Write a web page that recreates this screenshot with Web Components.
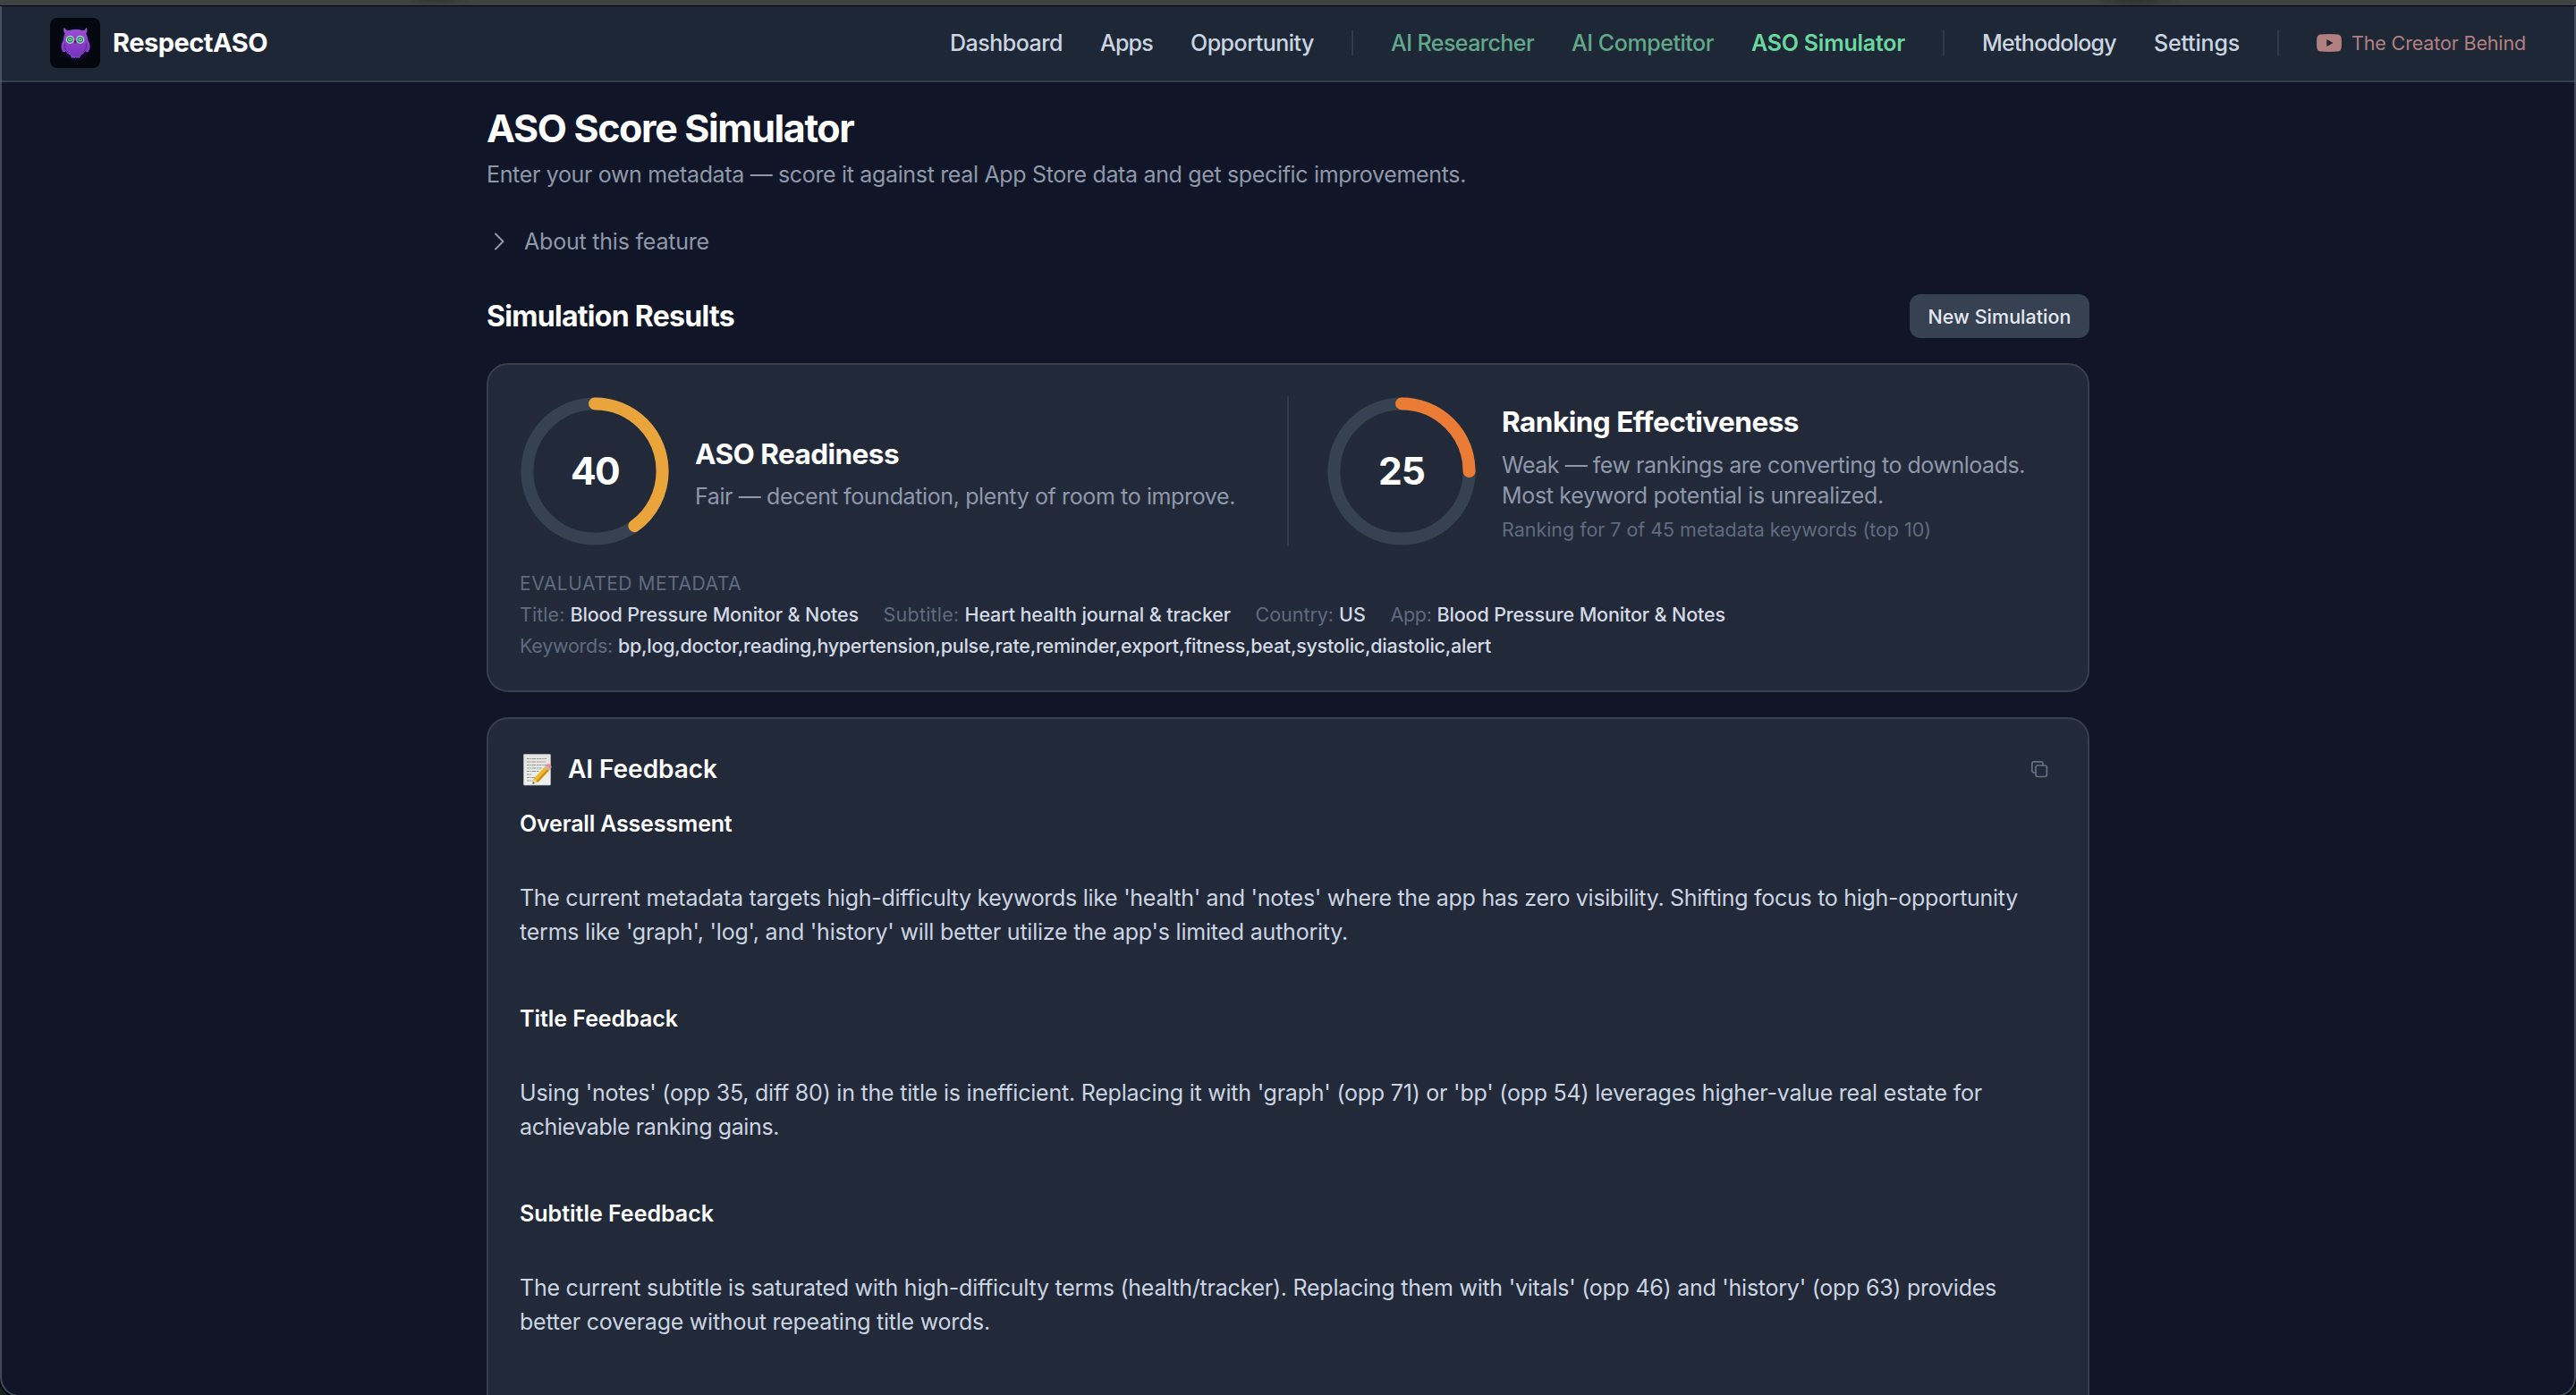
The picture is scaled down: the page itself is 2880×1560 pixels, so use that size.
<!DOCTYPE html>
<html lang="en">
<head>
<meta charset="utf-8">
<title>RespectASO</title>
<style>
html,body{margin:0;height:1560px;overflow:hidden;background:#101627}
body{font-family:Inter,"Liberation Sans",sans-serif;color:#fff}
</style>
</head>
<body>
<aso-app></aso-app>
<script>
function define(name, markup, setup){
  const tpl=document.createElement('template');
  tpl.innerHTML=markup;
  customElements.define(name,class extends HTMLElement{
    connectedCallback(){
      if(this.shadowRoot)return;
      this.attachShadow({mode:'open'}).appendChild(tpl.content.cloneNode(true));
      if(setup)setup(this,this.shadowRoot);
    }
  });
}

define('aso-logo',`
<style>:host{display:block;width:56px;height:56px}svg{display:block}</style>
<svg width="56" height="56" viewBox="0 0 56 56">
<defs><radialGradient id="g"><stop offset="0" stop-color="#5a35d0" stop-opacity=".95"/><stop offset=".6" stop-color="#2b2386" stop-opacity=".45"/><stop offset="1" stop-color="#05070f" stop-opacity="0"/></radialGradient>
<linearGradient id="b" x1="0" y1="0" x2="0" y2="1"><stop offset="0" stop-color="#9a4fd2"/><stop offset=".55" stop-color="#8a3cc6"/><stop offset="1" stop-color="#7434bd"/></linearGradient></defs>
<rect width="56" height="56" rx="8" fill="#04070e"/>
<ellipse cx="28.500" cy="29" rx="21" ry="22" fill="url(#g)"/>
<path d="M16 11.500c1 2.500 3.500 3.300 6 2.800 4-1.300 9-1.300 13 0 2.500.5 4.500-.3 5.500-2.800 1 2 .6 4.300-.8 5.800 1.500 3 1.600 5.700 2.500 8.700 2.500 4 2.500 8.500-.2 12-1.500-.2-2-.7-2.500-1.500-1.500 2.500-3.700 4-6 5l-.8 3-1.700-.8-1.300 1-1.200-1.500-1.200 1.500-1.500-1-1.500.8-.8-3c-2.500-1-4.700-2.500-6-5-.5.8-1.200 1.300-2.500 1.500-2.700-3.500-2.500-8 0-12 .8-3 .8-5.700 2-8.700-1.500-1.500-1.800-3.800-1-5.800z" fill="url(#b)" stroke="#a05be8" stroke-width=".8"/>
<path d="M17 28c-1.500 4 0 8 3 10M40 28c1.500 4 0 8-3 10" stroke="#5b2399" fill="none"/>
<circle cx="22.300" cy="24.300" r="4.600" fill="#c3d2d6"/><circle cx="33.700" cy="24.300" r="4.600" fill="#c3d2d6"/>
<circle cx="22.300" cy="24.300" r="2.700" fill="#a4e8cf" stroke="#16895f" stroke-width="1.300"/><circle cx="33.700" cy="24.300" r="2.700" fill="#a4e8cf" stroke="#16895f" stroke-width="1.300"/>
<circle cx="22.300" cy="24.300" r="1" fill="#0c4b3d"/><circle cx="33.700" cy="24.300" r="1" fill="#0c4b3d"/>
<path d="M26.800 25.500h2.600L28.100 29.500z" fill="#2b1647"/>
</svg>`);

define('nav-link',`
<style>
:host{display:flex;align-items:center;color:#cbd5e1;font-size:25px;line-height:34px;font-weight:500}
:host([tone=ai]){color:#61a98a}
:host([tone=active]){color:#69d99f;font-weight:600}
:host([tone=creator]){color:#b38082;font-size:21.500px;gap:11px;font-weight:400}
</style><slot name="icon"></slot><text-run><slot></slot></text-run>`,(h,r)=>{
  r.querySelector('text-run').setAttribute('w',h.getAttribute('w'));
});

define('nav-rule',`<style>:host{display:block;width:2px;height:28px;background:#2f3a4a}</style>`);

define('aso-nav',`
<style>
:host{display:flex;box-sizing:border-box;height:85px;padding:0 56px 1px;align-items:center;justify-content:space-between;background:#1e2736;border-bottom:2px solid #343d4e}
.brand{display:flex;align-items:center;gap:14px;font-size:29px;font-weight:700;line-height:40px}
nav{display:flex;align-items:center;gap:42px}
svg{display:block}
</style>
<div class="brand"><aso-logo></aso-logo><text-run w="173">RespectASO</text-run></div>
<nav>
<nav-link w="126">Dashboard</nav-link><nav-link w="59">Apps</nav-link><nav-link w="138">Opportunity</nav-link>
<nav-rule></nav-rule>
<nav-link tone="ai" w="160">AI Researcher</nav-link><nav-link tone="ai" w="159">AI Competitor</nav-link><nav-link tone="active" w="172">ASO Simulator</nav-link>
<nav-rule></nav-rule>
<nav-link w="150">Methodology</nav-link><nav-link w="96">Settings</nav-link>
<nav-rule></nav-rule>
<nav-link tone="creator" w="195"><svg slot="icon" width="28" height="20" viewBox="0 0 28 20"><path fill="#b38082" fill-rule="evenodd" d="M5 .4Q14-.4 23 .4Q27.200.6 27.600 4.500Q28.300 10 27.600 15.500Q27.200 19.400 23 19.600Q14 20.400 5 19.600Q.8 19.400.4 15.500Q-.3 10 .4 4.500Q.8.6 5 .4ZM11.300 5.900V14.100L18.500 10Z"/></svg>The Creator Behind</nav-link>
</nav>`);

define('page-heading',`
<style>
:host{display:block}
h1{margin:0;font-size:43px;line-height:56px;font-weight:700}
p{margin:7px 0 0;font-size:25px;line-height:34px;color:#8e98aa}
</style>
<h1><text-run w="410.5"><slot></slot></text-run></h1>
<p><text-run w="1095"><slot name="sub"></slot></text-run></p>`);

define('about-toggle',`
<style>
:host{display:flex;align-items:center;gap:20px;margin-top:41px;padding-left:8px;font-size:25px;line-height:34px;color:#8e98aa}
svg{display:block}
</style>
<svg width="14" height="20" viewBox="0 0 14 20"><path d="M2 1.500l8.500 8.500L2 18.500" fill="none" stroke="#8e98aa" stroke-width="2" stroke-linecap="round" stroke-linejoin="round"/></svg>
<text-run w="207"><slot></slot></text-run>`);

define('results-bar',`
<style>
:host{display:flex;align-items:center;justify-content:space-between;margin-top:42px;height:49px}
h2{margin:0;padding-top:1px;font-size:32px;line-height:42px;font-weight:650}
button{height:49px;width:201px;padding:0;border:0;border-radius:12px;background:#364152;color:#e5eaf2;font:500 21.500px/28px Inter,"Liberation Sans",sans-serif;display:flex;align-items:center;justify-content:center}
</style>
<h2><text-run w="277">Simulation Results</text-run></h2>
<button><text-run w="160">New Simulation</text-run></button>`);

define('score-ring',`
<style>
:host{display:grid;flex:none;width:168px;height:168px;place-items:center}
:host>*{grid-area:1/1}
svg,text-run{grid-area:1/1}
svg{display:block}
text-run{font-size:42.500px;line-height:56px;font-weight:700}
</style>
<svg width="168" height="168" viewBox="0 0 120 120"><circle cx="60" cy="60" r="54" fill="none" stroke="#364152" stroke-width="10"/><circle class="arc" cx="60" cy="60" r="54" fill="none" stroke-width="10" stroke-linecap="round" pathLength="100" transform="rotate(-90 60 60)"/></svg>
<text-run w="54"></text-run>`,(h,r)=>{
  const v=h.getAttribute('value'),a=r.querySelector('.arc'),t=r.querySelector('text-run');
  a.setAttribute('stroke',h.getAttribute('color'));
  a.setAttribute('stroke-dasharray',v+' 100');
  t.textContent=v;
  t.setAttribute('w',h.getAttribute('w'));
});

define('score-block',`
<style>
:host{display:flex;gap:28px;height:168px}
.body{padding-top:var(--drop)}
h3{margin:0 0 9.500px;font-size:31.500px;line-height:42px;font-weight:650}
.desc{font-size:25px;line-height:34.300px;color:#8e98aa}
.note{margin-top:7px;font-size:21.500px;line-height:28px;color:#5f6b80}
</style>
<slot name="ring"></slot>
<div class="body"><h3><slot></slot></h3><div class="desc"><slot name="desc"></slot></div><div class="note"><slot name="note"></slot></div></div>`);

define('meta-field',`
<style>
:host{display:flex;gap:6px;line-height:35px;font-size:21.500px}
.l{color:#5f6b80}.v{color:#d3dae5;font-weight:500}
</style>
<text-run class="l"></text-run><text-run class="v"><slot></slot></text-run>`,(h,r)=>{
  const [a,b]=h.getAttribute('w').split(' '),l=r.querySelector('.l');
  l.textContent=h.getAttribute('label')+':';
  l.setAttribute('w',a);
  r.querySelector('.v').setAttribute('w',b);
});

define('panel-card',`
<style>
:host{display:block;box-sizing:border-box;margin-top:28px;padding:35px 35px 31px;background:#222939;border:2px solid #353f4d;border-radius:24px}
</style><slot></slot>`);

define('score-summary',`
<style>
:host{display:block}
.scores{display:flex}
.scores>:first-child{width:858px}
.rule{width:2px;background:#303a4a;margin-right:42px}
.cap{margin:28px 0 3px;font-size:21px;line-height:28px;color:#5f6b80}
.row{display:flex;gap:27.500px}
.keys{margin-bottom:1px}
</style>
<div class="scores">
<score-block style="--drop:43.500px"><score-ring slot="ring" value="40" w="54" color="#e9a43b"></score-ring><text-run w="228">ASO Readiness</text-run><text-run slot="desc" w="604">Fair — decent foundation, plenty of room to improve.</text-run></score-block>
<div class="rule"></div>
<score-block style="--drop:8px"><score-ring slot="ring" value="25" w="52" color="#ea7c35"></score-ring><text-run w="332">Ranking Effectiveness</text-run><text-run slot="desc" w="585">Weak — few rankings are converting to downloads.</text-run><text-run slot="desc" w="427">Most keyword potential is unrealized.</text-run><text-run slot="note" w="480">Ranking for 7 of 45 metadata keywords (top 10)</text-run></score-block>
</div>
<div class="cap"><text-run w="248">EVALUATED METADATA</text-run></div>
<div class="row">
<meta-field label="Title" w="50.5 322.5">Blood Pressure Monitor &amp; Notes</meta-field>
<meta-field label="Subtitle" w="85 297.5">Heart health journal &amp; tracker</meta-field>
<meta-field label="Country" w="87.5 30">US</meta-field>
<meta-field label="App" w="46 322.5">Blood Pressure Monitor &amp; Notes</meta-field>
</div>
<meta-field class="keys" label="Keywords" w="104 976">bp,log,doctor,reading,hypertension,pulse,rate,reminder,export,fitness,beat,systolic,diastolic,alert</meta-field>`);

define('memo-icon',`
<style>:host{display:block;width:54px;height:42px}svg{display:block}</style>
<svg width="40" height="42" viewBox="0 0 40 42">
<defs><linearGradient id="p" x1="0" y1="0" x2="0" y2="1"><stop offset="0" stop-color="#e3e3df"/><stop offset="1" stop-color="#f0f0ee"/></linearGradient></defs>
<rect x="4.500" y="4.500" width="30" height="34.500" rx=".8" fill="url(#p)" stroke="#b9bab8" stroke-width=".7"/>
<path d="M8 9.500h22M8 13h21M8 16.500h22M8 20h17M8 23.500h14M8 27h5M8 30.500h9M8 34h7" stroke="#8f9192" stroke-width="1.200" stroke-dasharray="3 .8 1.500 .7 4 .9 2 .6"/>
<path d="M15.200 32.500L29 17.500l5.200 3.500L20.500 35.800l-5 1z" fill="#f0b92b"/>
<path d="M20.500 35.800L34.200 21l-1.800-1.300L18.200 35z" fill="#c88d1a"/>
<path d="M15.200 32.500l-.7 5 6-1.700c-1.500-.3-2-1.300-2.200-2-.9.200-2.300-.2-3.100-1.300z" fill="#e8cfa0"/>
<path d="M14.800 35.200l-.4 2.500 2.500-.8z" fill="#3c3835"/>
<path d="M27.600 19l1.600-1.800 5.200 3.600-1.600 1.800z" fill="#b7bcc2"/>
<path d="M29.200 17.200l1.500-1.600c2-1 5.200 1 5 3.400l-1.300 1.800z" fill="#e9898c"/>
</svg>`);

define('copy-icon',`
<style>:host{display:block;width:20px;height:20px;margin-right:9px}svg{display:block}</style>
<svg width="20" height="20" viewBox="0 0 20 20" fill="none" stroke="#647086" stroke-width="1.700" stroke-linecap="round" stroke-linejoin="round"><rect x="6" y="6" width="12.400" height="12.500" rx="2.200"/><path d="M14 5.800V4a2.200 2.200 0 0 0-2.200-2.200H4A2.200 2.200 0 0 0 1.800 4v7.800A2.200 2.200 0 0 0 4 14h1.800"/></svg>`);

define('feedback-head',`
<style>
:host{display:flex;align-items:center;height:42px;margin-bottom:21px}
h3{margin:0;flex:1;font-size:28px;line-height:42px;font-weight:600}
</style>
<memo-icon></memo-icon><h3><text-run w="167"><slot></slot></text-run></h3><copy-icon></copy-icon>`);

define('feedback-section',`
<style>
:host{display:block;font-size:25px;line-height:38px;margin-bottom:59px}
h4{margin:0 0 45px;font-size:25px;font-weight:600}
p{margin:0;color:#cbd5e1}
</style>
<h4><slot name="title"></slot></h4><p><slot></slot></p>`);

define('aso-app',`
<style>
:host{display:block;height:1560px;overflow:hidden;position:relative;background:#101627}
.strip{height:6px;border-bottom:1px solid #030508;background:radial-gradient(ellipse 50px 10px at 2388px 0,#303133,transparent),radial-gradient(ellipse 40px 6px at 490px 0,#333436,transparent),#404142}
main{width:1792px;margin:0 auto;padding-top:23px}
.frame{position:absolute;left:0;right:0;top:7px;height:1553px;border:2px solid rgba(110,120,135,.5);border-top:0;border-radius:0 0 22px 22px;box-shadow:0 0 0 2px #05080a,0 0 0 16px #18221f;clip-path:inset(0 0 -10px 0);pointer-events:none}
</style>
<div class="strip"></div>
<aso-nav></aso-nav>
<main>
<page-heading>ASO Score Simulator<span slot="sub">Enter your own metadata — score it against real App Store data and get specific improvements.</span></page-heading>
<about-toggle>About this feature</about-toggle>
<results-bar></results-bar>
<panel-card><score-summary></score-summary></panel-card>
<panel-card>
<feedback-head>AI Feedback</feedback-head>
<feedback-section><text-run slot="title" w="237.5">Overall Assessment</text-run><text-run w="1675">The current metadata targets high-difficulty keywords like 'health' and 'notes' where the app has zero visibility. Shifting focus to high-opportunity</text-run><text-run w="926">terms like 'graph', 'log', and 'history' will better utilize the app's limited authority.</text-run></feedback-section>
<feedback-section><text-run slot="title" w="177">Title Feedback</text-run><text-run w="1635">Using 'notes' (opp 35, diff 80) in the title is inefficient. Replacing it with 'graph' (opp 71) or 'bp' (opp 54) leverages higher-value real estate for</text-run><text-run w="290">achievable ranking gains.</text-run></feedback-section>
<feedback-section><text-run slot="title" w="217">Subtitle Feedback</text-run><text-run w="1651">The current subtitle is saturated with high-difficulty terms (health/tracker). Replacing them with 'vitals' (opp 46) and 'history' (opp 63) provides</text-run><text-run w="526">better coverage without repeating title words.</text-run></feedback-section>
</panel-card>
</main>
<div class="frame"></div>`);

/* One line of text, tracked evenly to span the width given in w. */
define('text-run',`<style>:host{display:block;white-space:nowrap}span{display:inline-block}</style><span><slot></slot></span>`,(h,r)=>{
  const w=parseFloat(h.getAttribute('w')),s=r.querySelector('span');
  if(!w)return;
  h.style.width=w+'px';
  const text=(function read(n){
    if(n.nodeType===3)return n.data;
    const kids=n.localName==='slot'?n.assignedNodes({flatten:true}):[...n.childNodes];
    return kids.map(read).join('');
  })(s).trim();
  s.style.letterSpacing=((w-s.getBoundingClientRect().width)/[...text].length)+'px';
});
</script>
</body>
</html>
